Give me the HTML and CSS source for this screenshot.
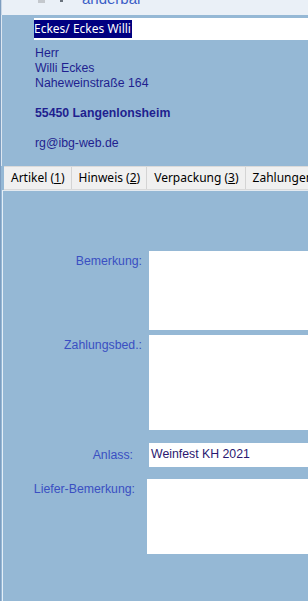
FILE: index.html
```html
<!DOCTYPE html>
<html lang="de">
<head>
    <meta charset="UTF-8">
    <meta name="viewport" content="width=device-width, initial-scale=1.0">
    <title>Adresse</title>
    <link rel="stylesheet" href="styles.css">
</head>
<body>
    <div class="window">
        <div class="topbar">
            <span class="icon-box"></span>
            <span class="icon-dot"></span>
            <span class="topbar-text">anderbar</span>
        </div>

        <div class="header">
            <div class="name-field">
                <span class="selected">Eckes/ Eckes Willi</span>
            </div>
            <div class="address">
                <div>Herr</div>
                <div>Willi Eckes</div>
                <div>Naheweinstraße 164</div>
                <div>&nbsp;</div>
                <div class="city">55450 Langenlonsheim</div>
                <div>&nbsp;</div>
                <div>rg@ibg-web.de</div>
            </div>
        </div>

        <div class="tabs">
            <div class="tab">Artikel (<u>1</u>)</div>
            <div class="tab">Hinweis (<u>2</u>)</div>
            <div class="tab">Verpackung (<u>3</u>)</div>
            <div class="tab">Zahlungen (<u>4</u>)</div>
        </div>

        <div class="panel">
            <div class="form">
                <label class="form-label">Bemerkung:</label>
                <div class="field field-bemerkung"></div>

                <label class="form-label">Zahlungsbed.:</label>
                <div class="field field-zahlung"></div>

                <label class="form-label label-anlass">Anlass:</label>
                <div class="field field-anlass">Weinfest KH 2021</div>

                <label class="form-label label-liefer">Liefer-Bemerkung:</label>
                <div class="field field-liefer"></div>
            </div>
        </div>
    </div>
</body>
</html>
```

FILE: styles.css
```css
html, body {
    margin: 0;
    padding: 0;
}
body {
    width: 308px;
    height: 601px;
    overflow: hidden;
    background-color: #95b8d5;
    font-family: "Liberation Sans", Arial, sans-serif;
    font-size: 12.3px;
}
.window {
    height: 601px;
    border-left: 1px solid #7d9dc0;
    display: flex;
    flex-direction: column;
    overflow: hidden;
}

/* cut-off row at the top */
.topbar {
    height: 15px;
    background-color: #eaf0f7;
    border-left: 1px solid #c9d7e6;
    position: relative;
    overflow: hidden;
}
.icon-box {
    position: absolute;
    left: 36px;
    top: 0;
    width: 7px;
    height: 3px;
    background-color: #c4c8cd;
}
.icon-dot {
    position: absolute;
    left: 58px;
    top: 0;
    width: 3px;
    height: 2px;
    background-color: #6a737d;
}
.topbar-text {
    position: absolute;
    left: 80px;
    top: -10px;
    font-size: 15px;
    color: #3a5ec6;
}

.header {
    padding: 3px 0 0 32px;
    height: 151px;
    box-sizing: border-box;
    border-left: 1px solid #dde7f1;
}
.name-field {
    height: 22px;
    background-color: #fff;
    display: flex;
    align-items: center;
    font-family: "Noto Sans", "DejaVu Sans", sans-serif;
    font-size: 12px;
}
.selected {
    background-color: #000080;
    color: #fff;
    line-height: 18px;
    padding-right: 1px;
}
.address {
    margin-top: 6px;
    padding-left: 1px;
    line-height: 15px;
    color: #1f1f8f;
}
.city {
    font-weight: bold;
}

.tabs {
    display: flex;
    height: 22px;
    margin-left: 3px;
    background-color: #f0f0f0;
    border-top: 1px solid #dadada;
    border-bottom: 1px solid #dadada;
    font-family: "Noto Sans", "Open Sans", sans-serif;
    font-size: 12px;
    color: #000;
    white-space: nowrap;
}
.tab {
    padding: 0 6px 0 7px;
    line-height: 22px;
    border-right: 1px solid #d4d4d4;
    flex-shrink: 0;
}

.panel {
    flex: 1;
    border-top: 1px solid #e4eaf0;
    border-left: 1px solid #e4eef8;
    margin-left: 1px;
    padding-top: 60px;
}
.form {
    display: grid;
    grid-template-columns: 139px 340px;
    column-gap: 7px;
    align-items: start;
}
.form-label {
    text-align: right;
    color: #3a4fc2;
    line-height: 16px;
    padding-top: 2px;
}
.field {
    background-color: #fff;
}
.field-bemerkung {
    height: 79px;
    margin-bottom: 5px;
}
.field-zahlung {
    height: 95px;
    margin-bottom: 13px;
}
.label-anlass {
    padding-top: 4px;
    padding-right: 9px;
}
.field-anlass {
    height: 24px;
    line-height: 22px;
    padding-left: 2px;
    margin-bottom: 12px;
    color: #2a1870;
}
.label-liefer {
    padding-right: 7px;
}
.field-liefer {
    height: 75px;
    margin-left: -2px;
}
```
